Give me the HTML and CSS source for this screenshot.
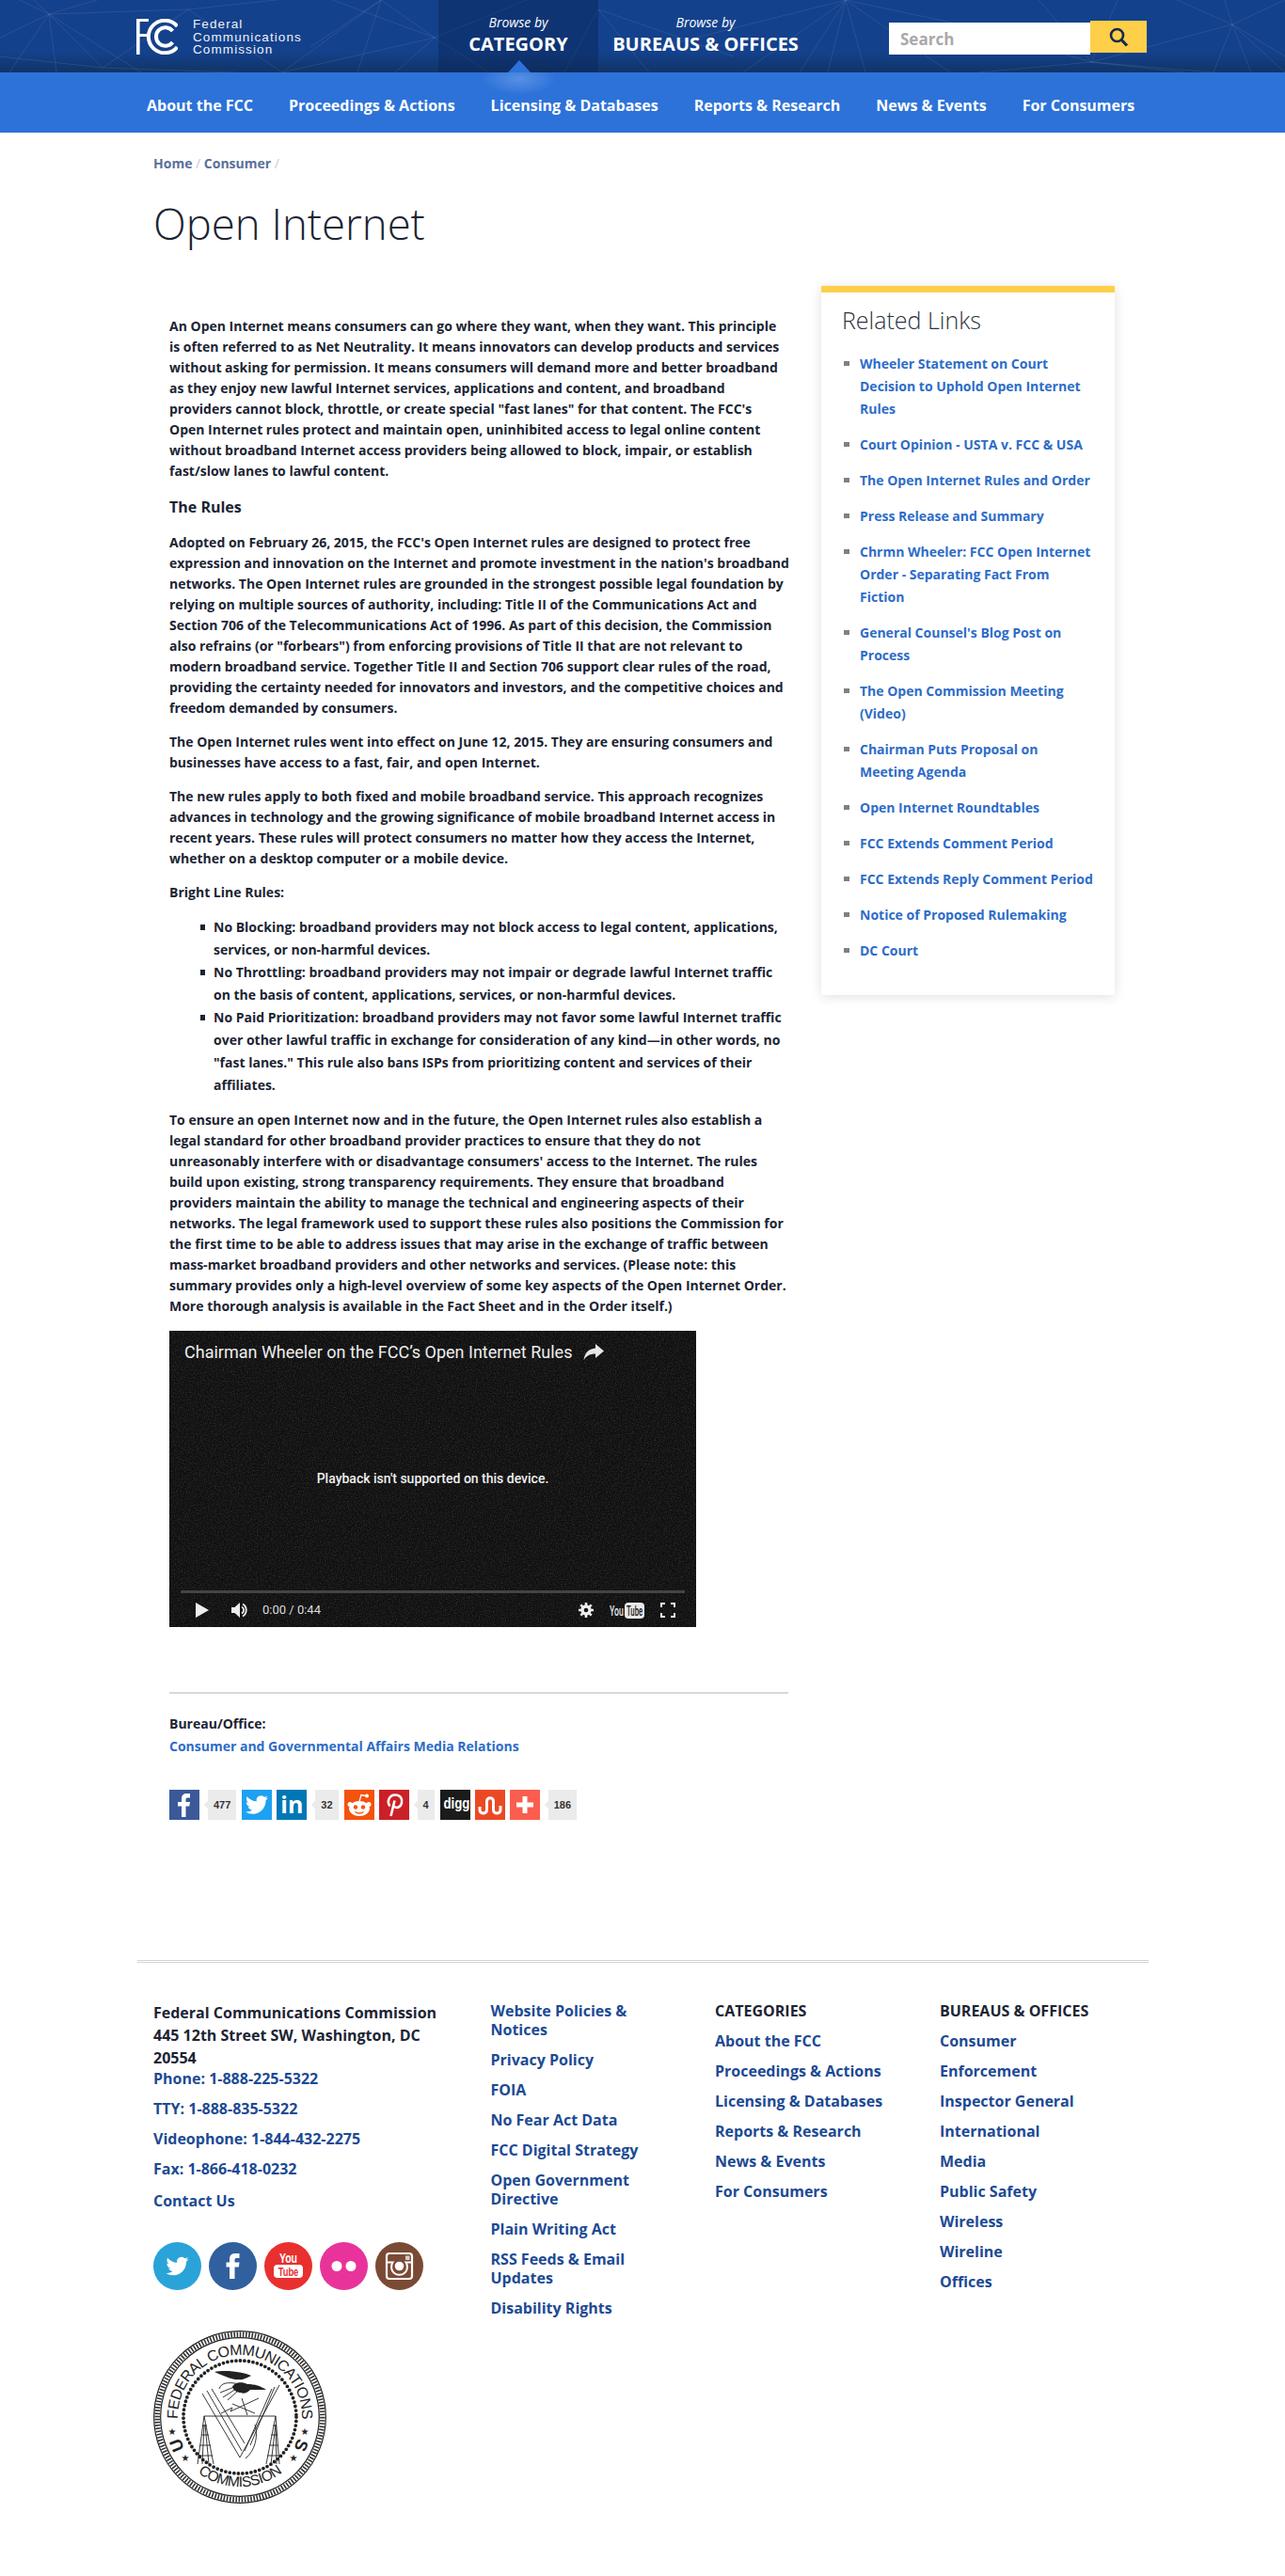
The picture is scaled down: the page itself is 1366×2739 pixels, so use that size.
FILE: index.html
```html
<!DOCTYPE html>
<html lang="en">
<head>
    <meta charset="UTF-8">
    <meta name="viewport" content="width=device-width, initial-scale=1.0">
    <title>Open Internet | Federal Communications Commission</title>
    <link rel="stylesheet" href="styles.css">
</head>
<body>
    <header class="top">
        <svg class="top__net" width="1366" height="77" viewBox="0 0 1366 77" aria-hidden="true">
            <g stroke="#fff" stroke-opacity="0.09" fill="none">
                <path d="M52 15L0 -10M52 15L0 40M52 15L10 77M52 15L60 77M52 15L109 72M52 15L150 77M52 15L120 -5M52 15L200 10M52 15L25 -10"/>
                <path d="M109 72L0 60M109 72L200 10M109 72L250 77M200 10L300 77M200 10L340 -5M300 77L405 0M300 77L462 40"/>
                <path d="M405 0L380 77M405 0L462 40M405 0L330 50M462 40L420 77M462 40L340 -5M462 40L520 77M462 40L560 0"/>
                <path d="M636 10L600 77M636 10L690 77M636 10L780 60M899 0L850 77M899 0L880 77M899 0L920 77M899 0L1010 77M899 0L790 77M899 0L700 50M899 0L1040 30"/>
                <path d="M1160 66L1040 77M1160 66L1100 -5M1160 66L1040 30M1160 66L1190 -5M1160 66L1260 77M1160 66L1310 26M1160 66L1290 77"/>
                <path d="M1310 26L1366 0M1310 26L1366 60M1310 26L1330 77M1310 26L1240 -5M1310 26L1290 77M1310 26L1300 -5M1310 26L1366 77"/>
            </g>
        </svg>
        <a class="logo" href="#">
            <svg class="logo__mark" width="44" height="38" viewBox="0 0 44 38" aria-hidden="true">
                <path d="M0 0H13V3H3.600V16H11V19H3.600V38H0Z" fill="#fff"/>
                <path d="M43.500 8A17.300 17.300 0 1 0 43.500 30" fill="none" stroke="#fff" stroke-width="4"/>
                <path d="M38.500 13A9.800 9.800 0 1 0 38.500 25" fill="none" stroke="#fff" stroke-width="4"/>
            </svg>
            <span class="logo__text">Federal<br>Communications<br>Commission</span>
        </a>
        <a class="browse browse--active" href="#">
            <em class="browse__by">Browse by</em>
            <strong class="browse__name">CATEGORY</strong>
        </a>
        <a class="browse browse--offices" href="#">
            <em class="browse__by">Browse by</em>
            <strong class="browse__name">BUREAUS &amp; OFFICES</strong>
        </a>
        <form class="search">
            <input class="search__input" type="text" placeholder="Search">
            <button class="search__btn" type="button" aria-label="Search">
                <svg width="22" height="22" viewBox="0 0 22 22" aria-hidden="true">
                    <circle cx="9.500" cy="9.500" r="6.500" fill="none" stroke="#14294e" stroke-width="2.600"/>
                    <path d="M14.300 14.500L20 20.500" stroke="#14294e" stroke-width="3.200"/>
                </svg>
            </button>
        </form>
    </header>

    <nav class="nav">
        <a class="nav__item" href="#">About the FCC</a>
        <a class="nav__item" href="#">Proceedings &amp; Actions</a>
        <a class="nav__item" href="#">Licensing &amp; Databases</a>
        <a class="nav__item" href="#">Reports &amp; Research</a>
        <a class="nav__item" href="#">News &amp; Events</a>
        <a class="nav__item" href="#">For Consumers</a>
    </nav>

    <main class="page">
        <div class="crumbs">
            <a class="crumbs__link" href="#">Home</a> <span class="crumbs__sep">/</span>
            <a class="crumbs__link" href="#">Consumer</a> <span class="crumbs__sep">/</span>
        </div>
        <h1 class="page__title">Open Internet</h1>

        <div class="page__row">
            <article class="article">
                <p>An Open Internet means consumers can go where they want, when they want. This principle is often referred to as Net Neutrality. It means innovators can develop products and services without asking for permission. It means consumers will demand more and better broadband as they enjoy new lawful Internet services, applications and content, and broadband providers cannot block, throttle, or create special "fast lanes" for that content. The FCC's Open Internet rules protect and maintain open, uninhibited access to legal online content without broadband Internet access providers being allowed to block, impair, or establish fast/slow lanes to lawful content.</p>
                <h2 class="article__heading">The Rules</h2>
                <p class="article__wide">Adopted on February 26, 2015, the FCC's Open Internet rules are designed to protect free expression and innovation on the Internet and promote investment in the nation's broadband networks. The Open Internet rules are grounded in the strongest possible legal foundation by relying on multiple sources of authority, including: Title II of the Communications Act and Section 706 of the Telecommunications Act of 1996. As part of this decision, the Commission also refrains (or "forbears") from enforcing provisions of Title II that are not relevant to modern broadband service. Together Title II and Section 706 support clear rules of the road, providing the certainty needed for innovators and investors, and the competitive choices and freedom demanded by consumers.</p>
                <p>The Open Internet rules went into effect on June 12, 2015. They are ensuring consumers and businesses have access to a fast, fair, and open Internet.</p>
                <p>The new rules apply to both fixed and mobile broadband service. This approach recognizes advances in technology and the growing significance of mobile broadband Internet access in recent years. These rules will protect consumers no matter how they access the Internet, whether on a desktop computer or a mobile device.</p>
                <p>Bright Line Rules:</p>
                <ul class="article__list">
                    <li>No Blocking: broadband providers may not block access to legal content, applications, services, or non-harmful devices.</li>
                    <li>No Throttling: broadband providers may not impair or degrade lawful Internet traffic on the basis of content, applications, services, or non-harmful devices.</li>
                    <li>No Paid Prioritization: broadband providers may not favor some lawful Internet traffic over other lawful traffic in exchange for consideration of any kind—in other words, no "fast lanes." This rule also bans ISPs from prioritizing content and services of their affiliates.</li>
                </ul>
                <p class="article__last">To ensure an open Internet now and in the future, the Open Internet rules also establish a legal standard for other broadband provider practices to ensure that they do not unreasonably interfere with or disadvantage consumers' access to the Internet. The rules build upon existing, strong transparency requirements. They ensure that broadband providers maintain the ability to manage the technical and engineering aspects of their networks. The legal framework used to support these rules also positions the Commission for the first time to be able to address issues that may arise in the exchange of traffic between mass-market broadband providers and other networks and services. (Please note: this summary provides only a high-level overview of some key aspects of the Open Internet Order. More thorough analysis is available in the Fact Sheet and in the Order itself.)</p>

                <div class="video">
                    <svg class="video__grain" width="560" height="315" aria-hidden="true">
                        <filter id="grain">
                            <feTurbulence type="fractalNoise" baseFrequency="0.75" numOctaves="2" seed="4"/>
                            <feColorMatrix values="0 0 0 0 1  0 0 0 0 1  0 0 0 0 1  0 0 0 0.9 -0.36"/>
                        </filter>
                        <rect width="560" height="315" filter="url(#grain)" opacity="0.3"/>
                    </svg>
                    <div class="video__title">
                        <span>Chairman Wheeler on the FCC’s Open Internet Rules</span>
                        <svg width="22" height="18" viewBox="0 0 22 18" aria-hidden="true">
                            <path d="M13 0L22 7.500L13 15V10.500C7.500 10.500 3.500 12.500 0.500 17C1.500 10 5.500 5 13 4.500Z" fill="#e6e6e6"/>
                        </svg>
                    </div>
                    <div class="video__message">Playback isn't supported on this device.</div>
                    <div class="video__progress"></div>
                    <div class="video__controls">
                        <svg class="video__play" width="14" height="16" viewBox="0 0 14 16" aria-hidden="true">
                            <path d="M0 0L14 8L0 16Z" fill="#eee"/>
                        </svg>
                        <svg class="video__volume" width="18" height="18" viewBox="0 0 18 18" aria-hidden="true">
                            <path d="M0 6H3.500L9 1V17L3.500 12H0Z" fill="#eee"/>
                            <path d="M11 5.500A4 4 0 0 1 11 12.500M12 2.500A7.500 7.500 0 0 1 12 15.500" fill="none" stroke="#eee" stroke-width="1.800"/>
                        </svg>
                        <span class="video__time">0:00 / 0:44</span>
                        <svg class="video__gear" width="16" height="16" viewBox="0 0 16 16" aria-hidden="true">
                            <circle cx="8" cy="8" r="4.200" fill="none" stroke="#eee" stroke-width="3"/>
                            <path d="M8 0V16M0 8H16M2.300 2.300L13.700 13.700M13.700 2.300L2.300 13.700" stroke="#eee" stroke-width="2.600"/>
                            <circle cx="8" cy="8" r="2.300" fill="#171717"/>
                        </svg>
                        <svg class="video__yt" width="37" height="17" viewBox="0 0 37 17" aria-hidden="true">
                            <text class="video__yt-you" transform="translate(0 13.500) scale(0.62 1)">You</text>
                            <rect x="16" y="0" width="21" height="17" rx="4" fill="#e8e8e8"/>
                            <text class="video__yt-tube" transform="translate(18 13.500) scale(0.55 1)">Tube</text>
                        </svg>
                        <svg class="video__full" width="16" height="16" viewBox="0 0 16 16" aria-hidden="true">
                            <path d="M1 5V1H5M11 1H15V5M15 11V15H11M5 15H1V11" fill="none" stroke="#eee" stroke-width="2"/>
                        </svg>
                    </div>
                </div>

                <div class="bureau">
                    <div class="bureau__label">Bureau/Office:</div>
                    <a class="bureau__link" href="#">Consumer and Governmental Affairs Media Relations</a>
                </div>

                <div class="share">
                    <a class="share__btn share__btn--fb" href="#">
                        <svg width="32" height="32" viewBox="0 0 32 32" aria-hidden="true"><path d="M13 29V17.500H9V13H13V9.500C13 5.500 15.500 4 18.500 4H22V8.500H19.500C18 8.500 17.500 9.200 17.500 10.500V13H22L21.300 17.500H17.500V29Z" fill="#fff"/></svg>
                    </a>
                    <span class="share__count">477</span>
                    <a class="share__btn share__btn--tw" href="#">
                        <svg width="32" height="32" viewBox="-4 -4 32 32" aria-hidden="true"><path d="M23.953 4.57a10 10 0 01-2.825.775 4.958 4.958 0 002.163-2.723c-.951.555-2.005.959-3.127 1.184a4.92 4.92 0 00-8.384 4.482C7.69 8.095 4.067 6.13 1.64 3.162a4.822 4.822 0 00-.666 2.475c0 1.71.87 3.213 2.188 4.096a4.904 4.904 0 01-2.228-.616v.06a4.923 4.923 0 003.946 4.827 4.996 4.996 0 01-2.212.085 4.936 4.936 0 004.604 3.417 9.867 9.867 0 01-6.102 2.105c-.39 0-.779-.023-1.17-.067a13.995 13.995 0 007.557 2.209c9.053 0 13.998-7.496 13.998-13.985 0-.21 0-.42-.015-.63A9.935 9.935 0 0024 4.59z" fill="#fff"/></svg>
                    </a>
                    <a class="share__btn share__btn--in" href="#"><span class="share__in">in</span></a>
                    <span class="share__count">32</span>
                    <a class="share__btn share__btn--reddit" href="#">
                        <svg width="32" height="32" viewBox="0 0 32 32" aria-hidden="true">
                            <ellipse cx="16" cy="20" rx="11" ry="8" fill="#fff"/>
                            <circle cx="6" cy="15.500" r="2.500" fill="#fff"/><circle cx="26" cy="15.500" r="2.500" fill="#fff"/>
                            <path d="M16 12.500L18 5.500L23 6.500" fill="none" stroke="#fff" stroke-width="1.300"/>
                            <circle cx="24" cy="6.500" r="2" fill="#fff"/>
                            <circle cx="12" cy="18.500" r="2.200" fill="#f4520d"/><circle cx="20" cy="18.500" r="2.200" fill="#f4520d"/>
                            <path d="M11.500 23.500C14 25.500 18 25.500 20.500 23.500" fill="none" stroke="#f4520d" stroke-width="1.300"/>
                        </svg>
                    </a>
                    <a class="share__btn share__btn--pin" href="#">
                        <svg width="32" height="32" viewBox="0 0 32 32" aria-hidden="true">
                            <path d="M11.500 17.500C8 13 10.500 5.500 17 5.500C22.500 5.500 25 9.500 24 14C23 18.500 18.500 20.500 16 17.500M16.500 11.500L12.500 28" fill="none" stroke="#fff" stroke-width="2.600"/>
                        </svg>
                    </a>
                    <span class="share__count">4</span>
                    <a class="share__btn share__btn--digg" href="#">
                        <svg width="32" height="32" viewBox="0 0 32 32" aria-hidden="true">
                            <text class="share__digg" transform="translate(3.500 20) scale(0.78 1)">digg</text>
                        </svg>
                    </a>
                    <a class="share__btn share__btn--su" href="#">
                        <svg width="32" height="32" viewBox="0 0 32 32" aria-hidden="true">
                            <path d="M5 18V21.500C5 26 12.500 26 12.500 21.500V12.500C12.500 7.500 19.500 7.500 19.500 12.500V21.500C19.500 26 27 26 27 21.500V17" fill="none" stroke="#fff" stroke-width="3"/>
                        </svg>
                    </a>
                    <a class="share__btn share__btn--plus" href="#">
                        <svg width="32" height="32" viewBox="0 0 32 32" aria-hidden="true"><path d="M13.500 7H18.500V13.500H25V18.500H18.500V25H13.500V18.500H7V13.500H13.500Z" fill="#fff"/></svg>
                    </a>
                    <span class="share__count">186</span>
                </div>
            </article>

            <aside class="related">
                <h3 class="related__title">Related Links</h3>
                <ul class="related__list">
                    <li><a href="#">Wheeler Statement on Court Decision to Uphold Open Internet Rules</a></li>
                    <li><a href="#">Court Opinion - USTA v. FCC &amp; USA</a></li>
                    <li><a href="#">The Open Internet Rules and Order</a></li>
                    <li><a href="#">Press Release and Summary</a></li>
                    <li><a href="#">Chrmn Wheeler: FCC Open Internet Order - Separating Fact From Fiction</a></li>
                    <li><a href="#">General Counsel's Blog Post on Process</a></li>
                    <li><a href="#">The Open Commission Meeting (Video)</a></li>
                    <li><a href="#">Chairman Puts Proposal on Meeting Agenda</a></li>
                    <li><a href="#">Open Internet Roundtables</a></li>
                    <li><a href="#">FCC Extends Comment Period</a></li>
                    <li><a href="#">FCC Extends Reply Comment Period</a></li>
                    <li><a href="#">Notice of Proposed Rulemaking</a></li>
                    <li><a href="#">DC Court</a></li>
                </ul>
            </aside>
        </div>
    </main>

    <footer class="footer">
        <div class="footer__col footer__col--contact">
            <address class="footer__address">Federal Communications Commission<br>445 12th Street SW, Washington, DC 20554</address>
            <ul class="footer__links">
                <li><a href="#">Phone: 1-888-225-5322</a></li>
                <li><a href="#">TTY: 1-888-835-5322</a></li>
                <li><a href="#">Videophone: 1-844-432-2275</a></li>
                <li><a href="#">Fax: 1-866-418-0232</a></li>
                <li class="footer__contact"><a href="#">Contact Us</a></li>
            </ul>
            <div class="social">
                <a class="social__item social__item--tw" href="#">
                    <svg width="51" height="51" viewBox="-13.500 -13.500 51 51" aria-hidden="true"><path d="M23.953 4.57a10 10 0 01-2.825.775 4.958 4.958 0 002.163-2.723c-.951.555-2.005.959-3.127 1.184a4.92 4.92 0 00-8.384 4.482C7.69 8.095 4.067 6.13 1.64 3.162a4.822 4.822 0 00-.666 2.475c0 1.71.87 3.213 2.188 4.096a4.904 4.904 0 01-2.228-.616v.06a4.923 4.923 0 003.946 4.827 4.996 4.996 0 01-2.212.085 4.936 4.936 0 004.604 3.417 9.867 9.867 0 01-6.102 2.105c-.39 0-.779-.023-1.17-.067a13.995 13.995 0 007.557 2.209c9.053 0 13.998-7.496 13.998-13.985 0-.21 0-.42-.015-.63A9.935 9.935 0 0024 4.59z" fill="#fff"/></svg>
                </a>
                <a class="social__item social__item--fb" href="#">
                    <svg width="51" height="51" viewBox="0 0 51 51" aria-hidden="true"><path d="M22 39V26.500H18.500V21.500H22V18C22 14 24.500 12 28 12H32.500V17H29.500C28 17 27.500 17.800 27.500 19V21.500H32.500L31.800 26.500H27.500V39Z" fill="#fff"/></svg>
                </a>
                <a class="social__item social__item--yt" href="#">
                    <svg width="51" height="51" viewBox="0 0 51 51" aria-hidden="true">
                        <text class="social__you" transform="translate(25.500 22) scale(0.7 1)">You</text>
                        <rect x="10" y="24" width="31" height="14" rx="4" fill="#fff"/>
                        <text class="social__tube" transform="translate(25.500 35.500) scale(0.72 1)">Tube</text>
                    </svg>
                </a>
                <a class="social__item social__item--fl" href="#">
                    <svg width="51" height="51" viewBox="0 0 51 51" aria-hidden="true"><circle cx="18" cy="25.500" r="5.500" fill="#fff"/><circle cx="33" cy="25.500" r="5.500" fill="#fff"/></svg>
                </a>
                <a class="social__item social__item--ig" href="#">
                    <svg width="51" height="51" viewBox="0 0 51 51" aria-hidden="true">
                        <rect x="12" y="12" width="27" height="27" rx="3" fill="none" stroke="#fff" stroke-width="2.200"/>
                        <path d="M12 21.500H18.500A8.500 8.500 0 1 0 32.500 21.500H39" fill="none" stroke="#fff" stroke-width="2"/>
                        <circle cx="25.500" cy="25.500" r="4.800" fill="#fff"/>
                        <rect x="32" y="14.500" width="4.500" height="4.500" fill="#d9cfc9"/>
                    </svg>
                </a>
            </div>
            <svg class="seal" width="184" height="184" viewBox="0 0 184 184" aria-hidden="true">
                <defs>
                    <path id="seal-top" d="M27 103.500A66 66 0 1 1 157 103.500"/>
                    <path id="seal-bottom" d="M35.300 139.600A74 74 0 0 0 148.700 139.600"/>
                </defs>
                <circle cx="92" cy="92" r="91.300" fill="none" stroke="#222" stroke-width="1.200"/>
                <circle cx="92" cy="92" r="87.800" fill="none" stroke="#333" stroke-width="5.500" stroke-dasharray="1.600 1.600"/>
                <circle cx="92" cy="92" r="84.300" fill="none" stroke="#222" stroke-width="1.200"/>
                <circle cx="92" cy="92" r="60" fill="none" stroke="#222" stroke-width="3.800" stroke-linecap="round" stroke-dasharray="0 4.560"/>
                <text class="seal__text"><textPath href="#seal-top" startOffset="50%" text-anchor="middle">FEDERAL COMMUNICATIONS</textPath></text>
                <text class="seal__text seal__text--small"><textPath href="#seal-bottom" startOffset="50%" text-anchor="middle">COMMISSION</textPath></text>
                <text class="seal__letter" transform="translate(25 122) rotate(-112) translate(0 6)">U</text>
                <text class="seal__letter" transform="translate(157 122) rotate(112) translate(0 6)">S</text>
                <text class="seal__star" x="20" y="111">★</text>
                <text class="seal__star" x="161" y="111">★</text>
                <text class="seal__star" x="34" y="139">★</text>
                <text class="seal__star" x="149" y="139">★</text>
                <g fill="none" stroke="#222" stroke-width="0.900">
                    <path d="M54 91H130"/>
                    <path d="M52 67L92 135L134 58M57 64L94 128M62 62L97 120M126 62L97 128M129 60L103 122"/>
                    <path d="M54 91L47 142M54 91L64 142M48 133H63M49 122H61M51 111H59M52 101H57M52 142L54 100M59 142L55 100"/>
                    <path d="M130 91L120 142M130 91L134 142M121 133H133M123 122H133M125 111H132M127 101H131M125 142L130 100M131 142L130 100"/>
                    <path d="M72 88L84 82L82 86L112 72M84 78L108 88M100 90L94 72"/>
                    <path d="M108 100C112 112 108 128 98 136"/>
                    <path d="M70 62C72 56 78 54 92 57M71 66L86 60M74 71L88 62M79 74L90 64"/>
                </g>
                <path d="M65 44C75 42 92 43 104 48C98 51 94 53 91 52C85 53 77 49 65 44Z" fill="#222"/>
                <path d="M84 60C86 55 94 54 100 57C108 57 114 59 120 63H103C100 66 96 68 93 66C88 66 85 63 84 60Z" fill="#222"/>
            </svg>
        </div>
        <ul class="footer__col footer__col--policies footer__links">
            <li><a href="#">Website Policies &amp; Notices</a></li>
            <li><a href="#">Privacy Policy</a></li>
            <li><a href="#">FOIA</a></li>
            <li><a href="#">No Fear Act Data</a></li>
            <li><a href="#">FCC Digital Strategy</a></li>
            <li><a href="#">Open Government Directive</a></li>
            <li><a href="#">Plain Writing Act</a></li>
            <li><a href="#">RSS Feeds &amp; Email Updates</a></li>
            <li><a href="#">Disability Rights</a></li>
        </ul>
        <div class="footer__col footer__col--list">
            <h4 class="footer__heading">CATEGORIES</h4>
            <ul class="footer__links">
                <li><a href="#">About the FCC</a></li>
                <li><a href="#">Proceedings &amp; Actions</a></li>
                <li><a href="#">Licensing &amp; Databases</a></li>
                <li><a href="#">Reports &amp; Research</a></li>
                <li><a href="#">News &amp; Events</a></li>
                <li><a href="#">For Consumers</a></li>
            </ul>
        </div>
        <div class="footer__col footer__col--last">
            <h4 class="footer__heading">BUREAUS &amp; OFFICES</h4>
            <ul class="footer__links">
                <li><a href="#">Consumer</a></li>
                <li><a href="#">Enforcement</a></li>
                <li><a href="#">Inspector General</a></li>
                <li><a href="#">International</a></li>
                <li><a href="#">Media</a></li>
                <li><a href="#">Public Safety</a></li>
                <li><a href="#">Wireless</a></li>
                <li><a href="#">Wireline</a></li>
                <li><a href="#">Offices</a></li>
            </ul>
        </div>
    </footer>
</body>
</html>
```

FILE: styles.css
```css
* {
    box-sizing: border-box;
}

body {
    margin: 0;
    background: #fff;
    color: #1b2433;
    font-family: "Open Sans", "Liberation Sans", sans-serif;
    font-size: 14px;
    font-weight: 700;
    line-height: 22px;
}

a {
    color: inherit;
    text-decoration: none;
}

ul {
    margin: 0;
    padding: 0;
    list-style: none;
}

/* top bar */
.top {
    position: relative;
    display: flex;
    height: 77px;
    padding-left: 145px;
    background: linear-gradient(#14418c 0, #14418c 72%, #113467 100%);
}

.top__net {
    position: absolute;
    top: 0;
    left: 0;
}

.logo {
    position: relative;
    display: flex;
    width: 321px;
    padding-top: 20px;
}

.logo__text {
    margin-top: -1px;
    margin-left: 16px;
    color: #eef2f8;
    font-family: "Liberation Sans", sans-serif;
    font-size: 13.500px;
    font-weight: 400;
    letter-spacing: 1.100px;
    line-height: 13.500px;
}

.browse {
    position: relative;
    display: flex;
    flex-direction: column;
    align-items: center;
    width: 170px;
    padding-top: 14px;
    color: #fff;
}

.browse--active {
    background: rgba(9, 36, 84, 0.42);
}

.browse--active::before {
    content: "";
    position: absolute;
    bottom: 0;
    left: 74px;
    border-left: 12px solid transparent;
    border-right: 12px solid transparent;
    border-bottom: 13px solid #2d72d9;
}

.browse--active::after {
    content: "";
    position: absolute;
    top: 77px;
    left: 46px;
    width: 80px;
    height: 24px;
    background: radial-gradient(ellipse at 50% 30%, rgba(140, 180, 240, 0.45), rgba(140, 180, 240, 0) 70%);
}

.browse--offices {
    width: 228px;
}

.browse__by {
    font-size: 14px;
    font-weight: 400;
    line-height: 20px;
}

.browse__name {
    font-size: 20px;
    font-weight: 700;
    line-height: 26px;
}

.search {
    position: relative;
    display: flex;
    margin-left: 81px;
    padding-top: 22px;
}

.search__input {
    width: 214px;
    height: 34px;
    margin-top: 2px;
    padding: 0 12px;
    border: 0;
    border-radius: 0;
    background: #fff;
    font-family: inherit;
    font-size: 17px;
    font-weight: 700;
}

.search__input::placeholder {
    color: #a9a9a9;
    opacity: 1;
}

.search__btn {
    display: flex;
    align-items: center;
    justify-content: center;
    width: 60px;
    height: 34px;
    padding: 0;
    border: 0;
    background: #ffcf4a;
}

/* blue nav */
.nav {
    display: flex;
    height: 64px;
    padding-left: 137px;
    background: #2d72d9;
}

.nav__item {
    padding: 0 19px;
    color: #fff;
    font-size: 16px;
    font-weight: 700;
    line-height: 70px;
}

/* main */
.page {
    padding-left: 163px;
}

.crumbs {
    padding-top: 23px;
    color: #c4cad6;
    line-height: 20px;
}

.crumbs__link {
    color: #5a6f99;
    font-weight: 700;
}

.crumbs__sep {
    font-weight: 400;
}

.page__title {
    margin: 23px 0 0;
    color: #1b2433;
    font-size: 45.500px;
    font-weight: 300;
    line-height: 60px;
}

.page__row {
    display: flex;
    margin-top: 37px;
}

.article {
    width: 675px;
    padding: 32px 0 0 17px;
}

.article p {
    margin: 0 0 14px;
}

.article .article__wide {
    margin-right: -6px;
}

.article__heading {
    margin: 16px 0;
    font-size: 16px;
    font-weight: 700;
    line-height: 22px;
}

.article__list {
    margin-bottom: 14px;
    padding-left: 47px;
    line-height: 24px;
}

.article__list li {
    position: relative;
}

.article__list li::before {
    content: "";
    position: absolute;
    top: 9px;
    left: -14px;
    width: 5px;
    height: 6px;
    background: #1b2433;
}

.article .article__last {
    margin-bottom: 15px;
}

/* video */
.video {
    position: relative;
    display: flex;
    flex-direction: column;
    width: 560px;
    height: 315px;
    padding: 0 12px;
    background: #0f0f0f;
    color: #eee;
    font-family: Roboto, "Liberation Sans", sans-serif;
}

.video__grain {
    position: absolute;
    top: 0;
    left: 0;
}

.video__title {
    position: relative;
    display: flex;
    align-items: center;
    gap: 12px;
    padding: 12px 0 0 4px;
    font-size: 18px;
    font-weight: 400;
    line-height: 22px;
}

.video__message {
    position: relative;
    flex: 1;
    display: flex;
    align-items: center;
    justify-content: center;
    padding-top: 4px;
    font-size: 14px;
    font-weight: 500;
}

.video__progress {
    position: relative;
    height: 3px;
    background: #444;
}

.video__controls {
    position: relative;
    display: flex;
    align-items: center;
    height: 36px;
}

.video__play {
    margin-left: 16px;
}

.video__volume {
    margin-left: 24px;
}

.video__time {
    margin-left: 15px;
    color: #ddd;
    font-size: 13px;
    font-weight: 400;
}

.video__gear {
    margin-left: auto;
}

.video__yt {
    margin-left: 17px;
}

.video__yt-you {
    fill: #e8e8e8;
    font-size: 14px;
    font-weight: 500;
}

.video__yt-tube {
    fill: #1a1a1a;
    font-size: 14px;
    font-weight: 500;
}

.video__full {
    margin: 0 10px 0 17px;
}

/* bureau + share */
.bureau {
    margin-top: 69px;
    padding-top: 21px;
    border-top: 2px solid #d6d9dd;
}

.bureau__link {
    display: block;
    margin-top: 2px;
    color: #2d6cc8;
}

.share {
    display: flex;
    height: 32px;
    margin-top: 35px;
    color: #333;
    font-family: "Liberation Sans", sans-serif;
    font-size: 11px;
}

.share__btn {
    display: block;
    width: 32px;
    height: 32px;
    margin-right: 5px;
    text-align: center;
}

.share__btn--fb {
    background: #3b5998;
}

.share__btn--tw {
    background: #1da1f2;
}

.share__btn--in {
    background: #0077b5;
}

.share__btn--reddit {
    background: #f4520d;
}

.share__btn--pin {
    background: #cb2027;
}

.share__btn--digg {
    background: #1b1b1b;
}

.share__btn--su {
    background: #eb4924;
}

.share__btn--plus {
    background: #fb5d4e;
}

.share__in {
    color: #fff;
    font-family: "Open Sans", sans-serif;
    font-size: 25px;
    line-height: 30px;
}

.share__digg {
    fill: #fff;
    font-family: "Liberation Sans", sans-serif;
    font-size: 17px;
}

.share__count {
    position: relative;
    min-width: 18px;
    margin: 0 6px 0 4px;
    padding: 0 6px;
    background: #ebebeb;
    line-height: 32px;
    text-align: center;
}

.share__count::before {
    content: "";
    position: absolute;
    top: 13px;
    left: -3px;
    width: 6px;
    height: 6px;
    background: #ebebeb;
    transform: rotate(45deg);
}

/* sidebar */
.related {
    width: 312px;
    height: 754px;
    margin-left: 35px;
    padding: 13px 23px 0 22px;
    border-top: 7px solid #ffcf4a;
    background: #fff;
    box-shadow: 0 2px 12px rgba(0, 0, 0, 0.12);
}

.related__title {
    margin: 0 0 19px;
    color: #2c3340;
    font-size: 25px;
    font-weight: 300;
    line-height: 32px;
}

.related__list {
    color: #2d6cc8;
    line-height: 24px;
}

.related__list li {
    position: relative;
    margin-bottom: 14px;
    padding-left: 19px;
}

.related__list li::before {
    content: "";
    position: absolute;
    top: 9px;
    left: 2px;
    width: 6px;
    height: 5px;
    background: #808080;
}

/* footer */
.footer {
    display: flex;
    width: 1075px;
    margin: 149px 0 0 146px;
    padding: 41px 0 77px 17px;
    border-top: 3px double #d3d3d3;
    font-size: 16px;
    line-height: 20px;
}

.footer__col {
    flex: none;
}

.footer__col--contact {
    width: 358.500px;
}

.footer__col--policies {
    width: 238.500px;
    padding-right: 60px;
}

.footer__col--list {
    width: 239px;
}

.footer__col--last {
    width: 222px;
}

.footer__address {
    width: 320px;
    font-style: normal;
    line-height: 24px;
}

.footer__links {
    color: #1c4a94;
}

.footer__links li {
    margin-bottom: 12px;
}

.footer__heading {
    margin: 0 0 12px;
    font-size: 16px;
    font-weight: 700;
    line-height: 20px;
}

.footer__contact {
    padding-top: 2px;
}

.social {
    display: flex;
    gap: 8px;
    margin-top: 34px;
}

.social__item {
    display: block;
    width: 51px;
    height: 51px;
    border-radius: 50%;
}

.social__item--tw {
    background: #2aa3d9;
}

.social__item--fb {
    background: #31609f;
}

.social__item--yt {
    background: #e8302f;
}

.social__item--fl {
    background: #e8349a;
}

.social__item--ig {
    background: #7b4a35;
}

.social__you,
.social__tube {
    font-family: "Liberation Sans", sans-serif;
    text-anchor: middle;
}

.social__you {
    fill: #fff;
    font-size: 15px;
}

.social__tube {
    fill: #e8302f;
    font-size: 13px;
}

.seal {
    display: block;
    margin-top: 43px;
}

.seal__text {
    fill: #222;
    font-family: "Liberation Sans", sans-serif;
    font-size: 16px;
    font-weight: 400;
    letter-spacing: -0.700px;
}

.seal__text--small {
    font-size: 15.500px;
    letter-spacing: -0.600px;
}

.seal__letter {
    fill: #222;
    font-family: "Liberation Sans", sans-serif;
    font-size: 18px;
    text-anchor: middle;
}

.seal__star {
    fill: #222;
    font-family: "DejaVu Sans", sans-serif;
    font-size: 10px;
    text-anchor: middle;
}
```
